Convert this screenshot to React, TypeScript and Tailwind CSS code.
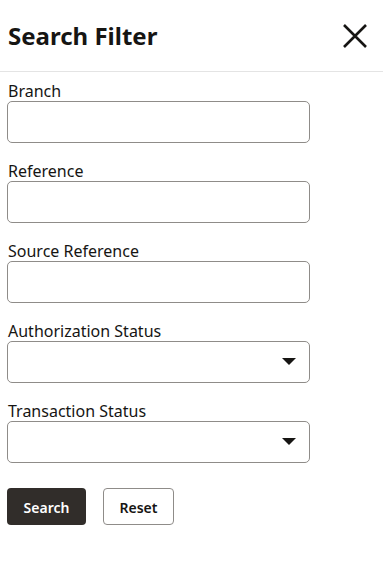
import React from 'react';

const fields = [
  { label: 'Branch', type: 'text' },
  { label: 'Reference', type: 'text' },
  { label: 'Source Reference', type: 'text' },
  { label: 'Authorization Status', type: 'select' },
  { label: 'Transaction Status', type: 'select' }
];

const App = () => {
  return <div className="w-[383px] h-[577px] bg-white text-[#161513]" style={{ fontFamily: '"Noto Sans", "Open Sans", sans-serif' }}>
      <div className="h-[72px] flex items-center justify-between pl-2 pr-[15px] border-b border-[#e4e4e4]">
        <h1 className="text-[24px] font-bold">Search Filter</h1>
        <button className="w-[26px] h-[26px] flex items-center justify-center">
          <svg width="26" height="26" viewBox="0 0 26 26">
            <path d="M2 2 L24 24 M24 2 L2 24" stroke="#161513" strokeWidth="2.6" fill="none" />
          </svg>
        </button>
      </div>
      <div className="pt-[8px] px-[7px]">
        {fields.map(f => <div key={f.label} className="mb-[17px]">
            <label className="block text-[16px] leading-[19px] pt-[2px] pl-[1px]">{f.label}</label>
            <div className="w-[303px] h-[42px] border border-[#8f8c89] rounded-[5px] flex items-center justify-end pr-[13px]">
              {f.type === 'select' && <svg width="14" height="8" viewBox="0 0 14 8">
                  <path d="M0 0 L14 0 L7 7 Z" fill="#161513" />
                </svg>}
            </div>
          </div>)}
        <div className="flex gap-[17px] mt-[25px]">
          <button className="w-[79px] h-[37px] rounded-[4px] bg-[#312d2a] text-white text-[14px] font-semibold pt-[1px]">Search</button>
          <button className="w-[71px] h-[37px] rounded-[4px] border border-[#8f8c89] bg-white text-[#161513] text-[14px] font-semibold pt-[1px]">Reset</button>
        </div>
      </div>
    </div>;
};

export default App;
